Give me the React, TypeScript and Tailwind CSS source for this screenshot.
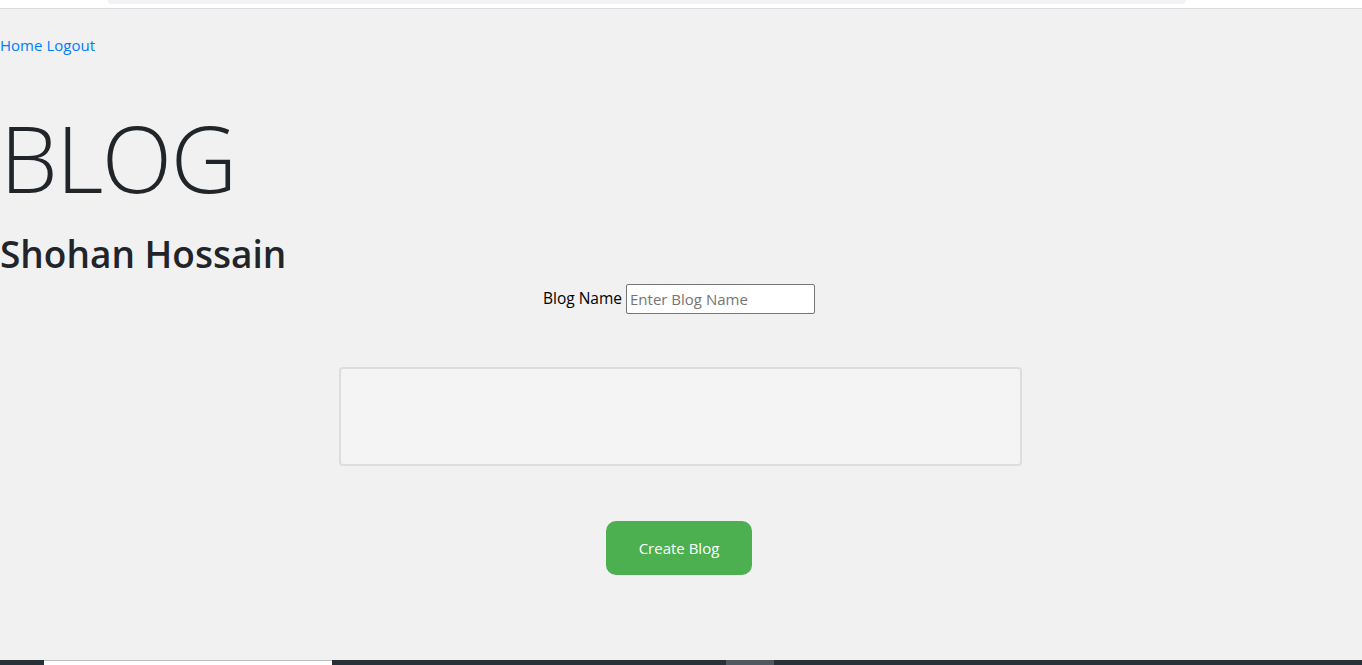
export default function App() {
  return (
    <div className="h-[665px] flex flex-col bg-[#f1f1f1] overflow-hidden" style={{ fontFamily: '"Open Sans", sans-serif' }}>
      {/* browser chrome strip */}
      <div className="h-[9px] bg-white border-b border-[#dadce0] flex">
        <div className="ml-[108px] w-[1078px] h-[4px] bg-[#f1f3f4] rounded-b-[12px]" />
      </div>

      <main className="flex-1 flex flex-col">
        <nav className="mt-[24px] flex gap-[4px] text-[15px] leading-[24px] text-[#007bff]">
          <a href="#">Home</a>
          <a href="#">Logout</a>
        </nav>

        <h1 className="mt-[46px] text-[92px] leading-[110px] font-light text-[#212529] tracking-[-1.5px]">BLOG</h1>
        <h2 className="mt-[19px] text-[37px] leading-[44px] font-semibold text-[#212529]">Shohan Hossain</h2>

        <div className="mt-[8px] flex justify-center items-center gap-[4px] text-[15.5px] text-black -translate-x-[2px]">
          <label htmlFor="blogname">Blog Name</label>
          <input
            id="blogname"
            placeholder="Enter Blog Name"
            className="w-[189px] h-[30px] border border-[#767676] rounded-[2px] bg-white px-[3px] text-[15px] placeholder:text-[#757575] outline-none"
          />
        </div>

        <div className="mt-[53px] mx-auto w-[683px] h-[99px] bg-[#f4f4f4] border-2 border-[#dddddd] rounded-[4px] -translate-x-[1px]" />

        <div className="mt-[55px] flex justify-center">
          <button className="w-[146px] h-[54px] bg-[#4caf50] text-white text-[15px] rounded-[10px] -translate-x-[2px]">Create Blog</button>
        </div>
      </main>

      {/* taskbar strip */}
      <div className="h-[5px] bg-[#263238] flex">
        <div className="ml-[44px] w-[288px] bg-white border-t border-[#c0c0c0]" />
        <div className="ml-[394px] w-[48px] bg-[#4f5a60]" />
      </div>
    </div>
  );
}
